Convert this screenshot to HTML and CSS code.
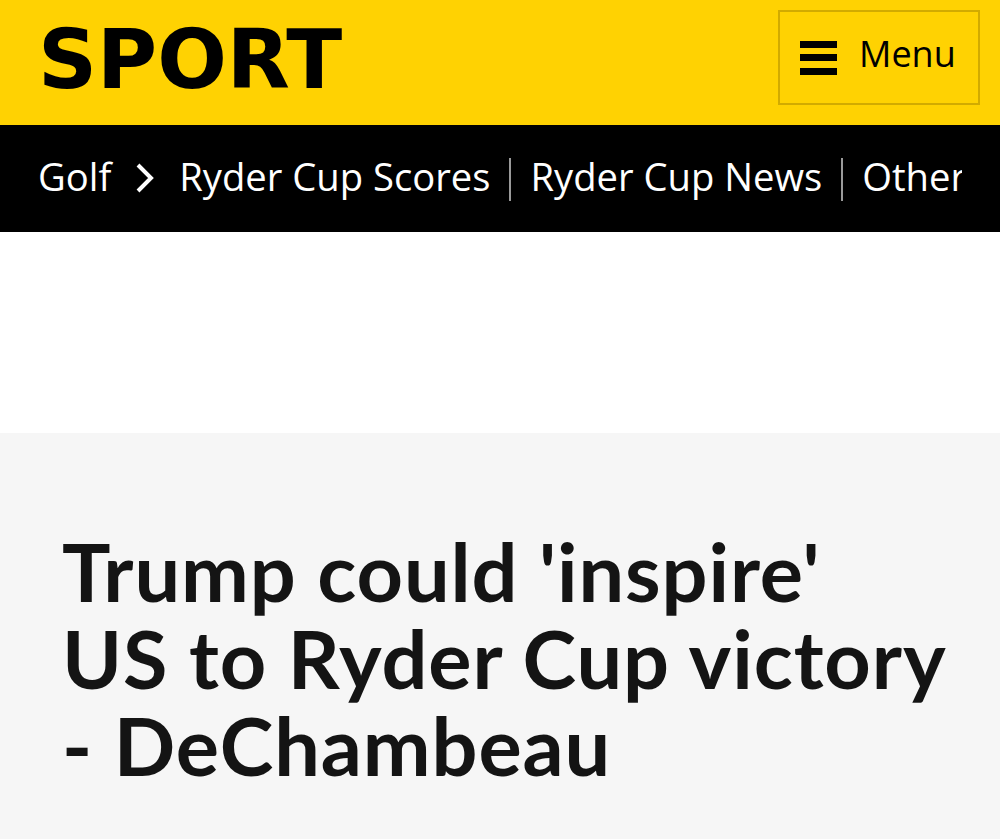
FILE: index.html
```html
<!DOCTYPE html>
<html lang="en">
<head>
<meta charset="utf-8">
<title>Sport - Golf</title>
<link rel="stylesheet" href="styles.css">
</head>
<body>
<header class="masthead">
  <div class="logo">SPORT</div>
  <button class="menu-btn" type="button">
    <svg class="burger" width="37" height="34" viewBox="0 0 37 34" aria-hidden="true">
      <rect x="0" y="0" width="37" height="7" fill="#000"/>
      <rect x="0" y="13" width="37" height="7" fill="#000"/>
      <rect x="0" y="27" width="37" height="7" fill="#000"/>
    </svg>
    <span class="menu-label">Menu</span>
  </button>
</header>
<nav class="subnav">
  <div class="subnav-track">
    <a class="subnav-link" href="#">Golf</a>
    <svg class="chevron" width="18" height="30" viewBox="0 0 18 30" aria-hidden="true">
      <polyline points="2,2 15,15 2,28" fill="none" stroke="#fff" stroke-width="4"/>
    </svg>
    <a class="subnav-link" href="#">Ryder Cup Scores</a>
    <span class="sep"></span>
    <a class="subnav-link" href="#">Ryder Cup News</a>
    <span class="sep"></span>
    <a class="subnav-link" href="#">Other</a>
  </div>
</nav>
<div class="ad-slot"></div>
<main class="article">
  <h1 class="headline">Trump could 'inspire'<br>US to Ryder Cup victory<br>- DeChambeau</h1>
</main>
</body>
</html>
```
FILE: styles.css
```css
html, body {
  margin: 0;
  padding: 0;
}
body {
  background: #f6f6f6;
  font-family: "Open Sans", "Noto Sans", Arial, sans-serif;
  color: #141414;
}
.masthead {
  background: #ffd202;
  height: 125px;
  box-sizing: border-box;
  padding: 0 20px 0 38px;
  display: flex;
  justify-content: space-between;
  align-items: flex-start;
}
.logo {
  font-family: "DejaVu Sans", sans-serif;
  font-weight: 700;
  font-size: 82px;
  line-height: 1;
  margin-top: 19px;
  color: #000;
}
.menu-btn {
  margin-top: 10px;
  width: 202px;
  height: 95px;
  box-sizing: border-box;
  border: 2px solid #d2ab00;
  background: transparent;
  display: flex;
  align-items: center;
  padding: 0 0 0 20px;
  gap: 22px;
  cursor: pointer;
}
.burger {
  display: block;
  flex: none;
}
.menu-label {
  font-family: "Open Sans", sans-serif;
  font-size: 36px;
  color: #000;
  line-height: 1.3;
  padding-bottom: 6px;
}
.subnav {
  background: #000;
  height: 107px;
  box-sizing: border-box;
  padding: 0 38px;
}
.subnav-track {
  display: flex;
  align-items: center;
  white-space: nowrap;
  gap: 19px;
  overflow: hidden;
  height: 100%;
  padding-bottom: 3px;
  box-sizing: border-box;
}
.subnav-link {
  color: #fff;
  text-decoration: none;
  font-size: 38.2px;
  line-height: 1.4;
  flex: none;
}
.chevron {
  display: block;
  flex: none;
  margin: 2px 6px 0 6px;
}
.sep {
  flex: none;
  width: 2px;
  height: 43px;
  margin-top: 4px;
  background: #9a9a9a;
}
.ad-slot {
  background: #fff;
  height: 201px;
}
.article {
  padding: 94px 38px 40px 62px;
}
.headline {
  margin: 0;
  font-family: "Lato", sans-serif;
  font-weight: 700;
  font-size: 81px;
  line-height: 87px;
  letter-spacing: 0.9px;
  white-space: nowrap;
  color: #141414;
}
```
